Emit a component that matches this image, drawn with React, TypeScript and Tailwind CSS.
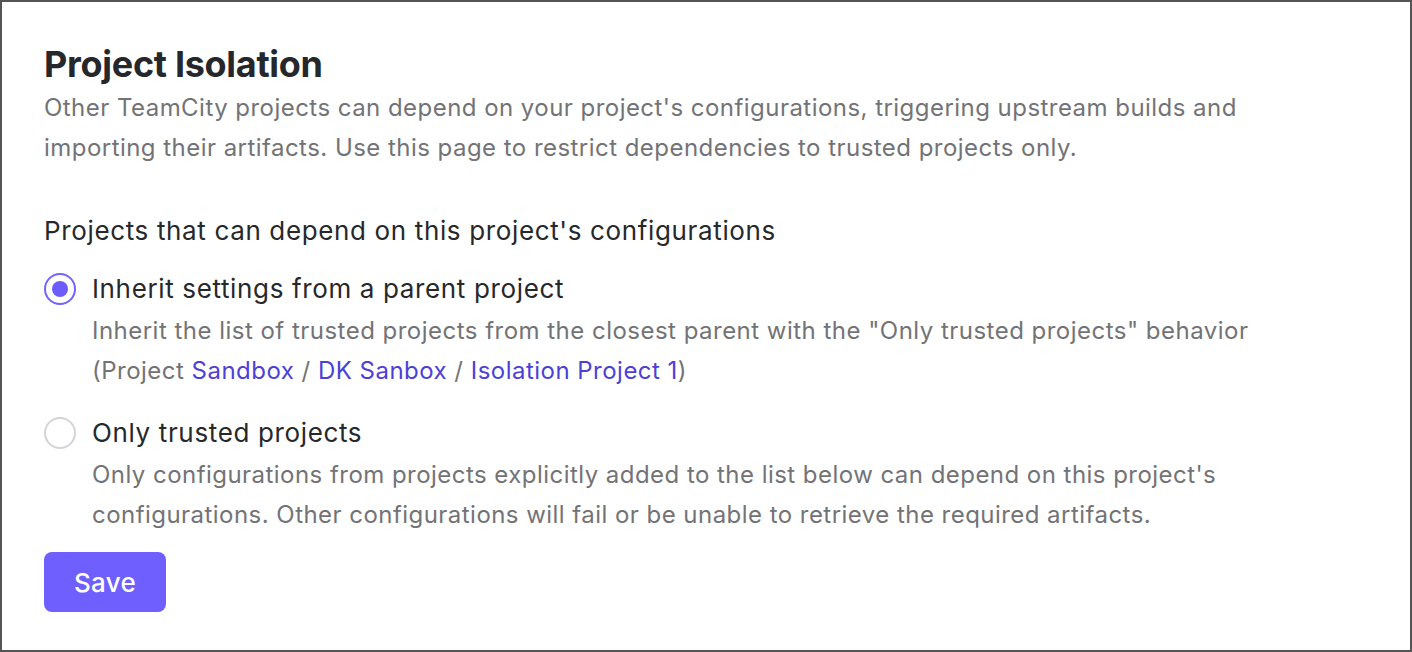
import React from "react";

function Radio({ checked }: { checked: boolean }) {
  return checked ? (
    <span className="flex h-[32px] w-[32px] shrink-0 items-center justify-center rounded-full border-2 border-[#7163ff] bg-white">
      <span className="h-[16px] w-[16px] rounded-full bg-[#6b5cfb]" />
    </span>
  ) : (
    <span className="h-[32px] w-[32px] shrink-0 rounded-full border-2 border-[#d3d3d8] bg-white" />
  );
}

export default function App() {
  return (
    <div
      className="h-[652px] w-[1412px] border-2 border-[#555555] bg-white text-[#27282c]"
      style={{ fontFamily: "Inter, 'Noto Sans', sans-serif" }}
    >
      <div className="px-[42px] pt-[40px]">
        <h1 className="text-[36px] font-bold leading-[44px] tracking-[-0.3px] text-[#26272b]">
          Project Isolation
        </h1>
        <p className="mt-[2px] text-[24px] leading-[40px] tracking-[0.46px] text-[#737377]">
          Other TeamCity projects can depend on your project's configurations, triggering upstream builds and
          <br />
          importing their artifacts. Use this page to restrict dependencies to trusted projects only.
        </p>

        <div className="mt-[43px] text-[26px] leading-[40px] tracking-[0.64px] text-[#27282c]">
          Projects that can depend on this project's configurations
        </div>

        <div className="mt-[18px] flex items-center gap-[16px]">
          <Radio checked />
          <span className="text-[26px] leading-[40px] tracking-[0.64px]">Inherit settings from a parent project</span>
        </div>
        <p className="ml-[48px] mt-[2px] text-[24px] leading-[40px] tracking-[0.48px] text-[#737377]">
          Inherit the list of trusted projects from the closest parent with the "Only trusted projects" behavior
          <br />
          (Project <a className="text-[#4d3fd8]">Sandbox</a> / <a className="text-[#4d3fd8]">DK Sanbox</a> /{" "}
          <a className="text-[#4d3fd8]">Isolation Project 1</a>)
        </p>

        <div className="mt-[22px] flex items-center gap-[16px]">
          <Radio checked={false} />
          <span className="text-[26px] leading-[40px] tracking-[0.64px]">Only trusted projects</span>
        </div>
        <p className="ml-[48px] mt-[2px] text-[24px] leading-[40px] tracking-[0.46px] text-[#737377]">
          Only configurations from projects explicitly added to the list below can depend on this project's
          <br />
          configurations. Other configurations will fail or be unable to retrieve the required artifacts.
        </p>

        <button className="mt-[17px] flex h-[60px] w-[122px] items-center justify-center rounded-[8px] bg-[#6e5ffe] text-[26px] font-medium tracking-[0.3px] text-white">
          Save
        </button>
      </div>
    </div>
  );
}
